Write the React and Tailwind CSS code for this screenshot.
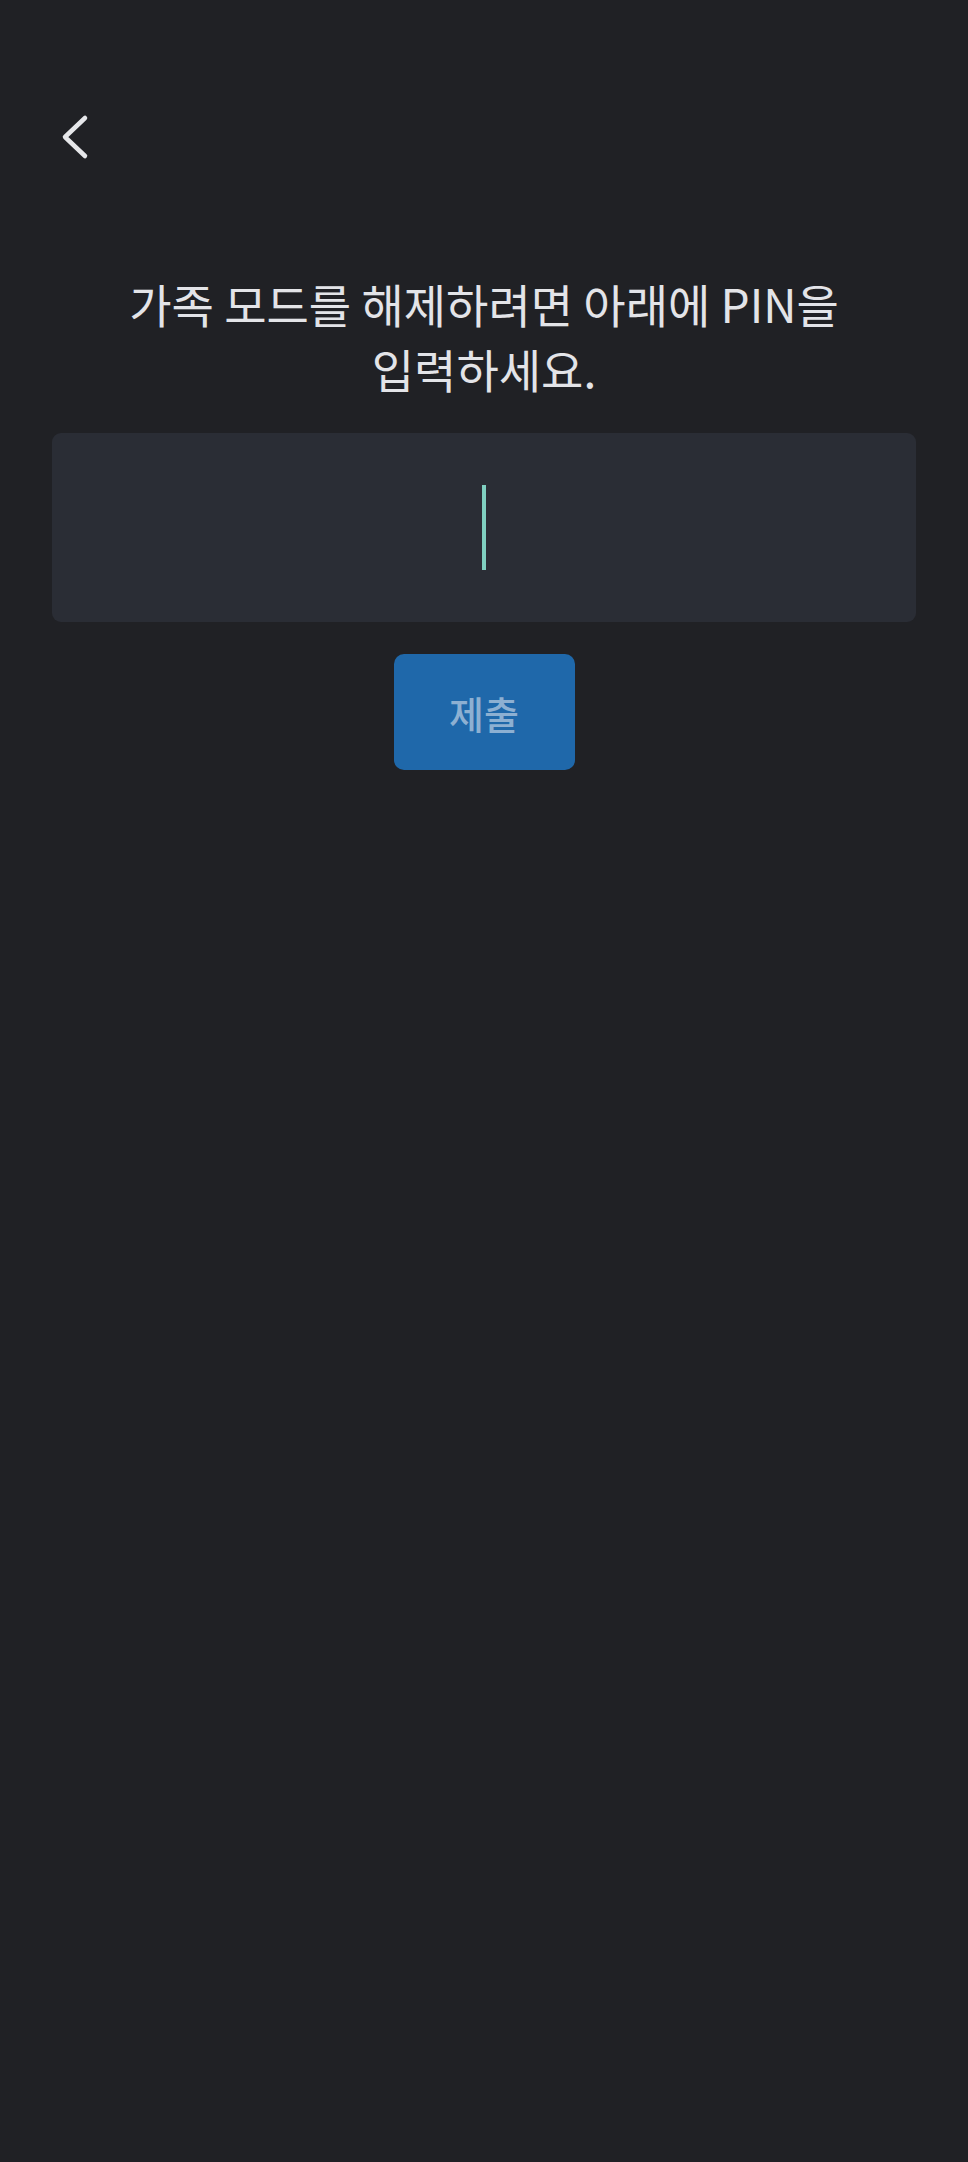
export default function App() {
  return (
    <div
      className="w-[968px] h-[2162px] bg-[#202125] flex flex-col"
      style={{ fontFamily: '"Noto Sans CJK KR", "Noto Sans", sans-serif' }}
    >
      <div className="h-[271px] relative">
        <svg
          className="absolute left-[56px] top-[112px]"
          width="36"
          height="50"
          viewBox="0 0 36 50"
          fill="none"
          stroke="#e6e7ea"
          strokeWidth="4.5"
          strokeLinecap="round"
          strokeLinejoin="round"
        >
          <polyline points="29,6 9,25 29,44" />
        </svg>
      </div>
      <h1 className="text-center text-[46px] leading-[65px] text-[#e3e4e8] font-normal px-[90px] break-keep">
        가족 모드를 해제하려면 아래에 PIN을 입력하세요.
      </h1>
      <div className="mx-[52px] mt-[32px] h-[189px] rounded-[9px] bg-[#2a2d35] flex items-center justify-center">
        <div className="w-[4px] h-[85px] bg-[#7fcfc0]" />
      </div>
      <div className="flex justify-center mt-[32px]">
        <button className="w-[181px] h-[116px] rounded-[10px] bg-[#1f68aa] text-[#8db0d2] text-[38px] font-medium">
          제출
        </button>
      </div>
    </div>
  );
}
